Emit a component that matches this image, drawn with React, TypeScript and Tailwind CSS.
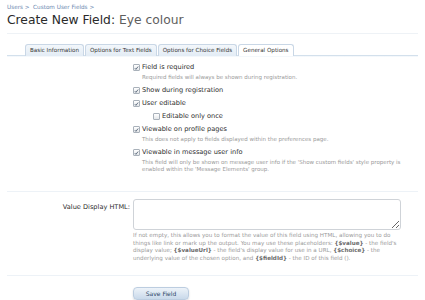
import React from 'react';

const tabs = [
  { label: 'Basic Information', active: false },
  { label: 'Options for Text Fields', active: false },
  { label: 'Options for Choice Fields', active: false },
  { label: 'General Options', active: true },
];

function Check({ checked }: { checked: boolean }) {
  return (
    <span className="mr-[2px] inline-flex h-[7px] w-[7px] shrink-0 items-center justify-center rounded-[1px] border border-[#a9b1ba] bg-gradient-to-b from-white to-[#e4e7ea]">
      {checked && (
        <svg width="6" height="6" viewBox="0 0 6 6" fill="none" aria-hidden="true">
          <path d="M1 3.2 L2.3 4.6 L5 1.2" stroke="#4a5a6e" strokeWidth="1" />
        </svg>
      )}
    </span>
  );
}

function Option({
  label,
  checked = true,
  help,
  indent = false,
}: {
  label: string;
  checked?: boolean;
  help?: React.ReactNode;
  indent?: boolean;
}) {
  return (
    <div className={indent ? 'pl-[20px]' : ''}>
      <label className="flex h-[13px] items-center text-[6.6px] text-[#2e2e2e]">
        <Check checked={checked} />
        {label}
      </label>
      {help && (
        <p className="mb-[3px] pl-[9px] text-[5.5px] leading-[7px] text-[#9a9a9a]">{help}</p>
      )}
    </div>
  );
}

function Ph({ children }: { children: string }) {
  return <b className="text-[#6b6b6b]">{children}</b>;
}

export default function App() {
  return (
    <div className="h-[300px] w-[425px] overflow-hidden bg-white px-[7px] font-['DejaVu_Sans',sans-serif]">
      <div className="pt-[4px] text-[5.7px] leading-[6px] text-[#6a88b0]">
        Users &gt;&nbsp;&nbsp;Custom User Fields &gt;
      </div>
      <h1 className="mt-[3px] text-[12.3px] leading-[15px] text-[#2a2a2a]">
        Create New Field: <span className="text-[#5e5e5e]">Eye colour</span>
      </h1>
      <div className="mt-[5px] border-b border-[#eef2f6]" />

      <div className="mt-[10px]">
        <ul className="flex gap-[1px] pl-[18px]">
          {tabs.map(tab => (
            <li
              key={tab.label}
              className={
                'relative -mb-[1px] flex h-[12px] items-center rounded-t-[3px] border border-b-0 border-[#c9d7e6] px-[4px] text-[5.6px] text-[#333] ' +
                (tab.active ? 'z-10 bg-white' : 'bg-gradient-to-b from-[#f3f7fb] to-[#e3ecf5]')
              }
            >
              {tab.label}
            </li>
          ))}
        </ul>
        <div className="h-[2px] border-t border-[#d3e0ec] bg-gradient-to-b from-[#e9f1f8] to-white" />
      </div>

      <div className="grid grid-cols-[126px_1fr] pt-[4px]">
        <div />
        <div className="pb-[15px]">
          <Option label="Field is required" help="Required fields will always be shown during registration." />
          <Option label="Show during registration" />
          <Option label="User editable" />
          <Option label="Editable only once" checked={false} indent />
          <Option label="Viewable on profile pages" help="This does not apply to fields displayed within the preferences page." />
          <Option
            label="Viewable in message user info"
            help={
              <>
                This field will only be shown on message user info if the 'Show custom fields' style property is
                <br />
                enabled within the 'Message Elements' group.
              </>
            }
          />
        </div>
      </div>

      <div className="border-t border-[#edf2f7]" />

      <div className="grid grid-cols-[126px_1fr] pt-[7px] pb-[12px]">
        <label className="pr-[3px] text-right text-[6.6px] leading-[16px] text-[#2e2e2e]">Value Display HTML:</label>
        <div>
          <textarea className="block h-[31px] w-[268px] resize-y rounded-[3px] border border-[#cfd3d8] bg-white" />
          <p className="mt-[2px] whitespace-nowrap text-[5.6px] leading-[7.7px] text-[#9a9a9a]">
            If not empty, this allows you to format the value of this field using HTML, allowing you to do
            <br />
            things like link or mark up the output. You may use these placeholders: <Ph>{'{$value}'}</Ph> - the field's
            <br />
            display value; <Ph>{'{$valueUrl}'}</Ph> - the field's display value for use in a URL, <Ph>{'{$choice}'}</Ph> - the
            <br />
            underlying value of the chosen option, and <Ph>{'{$fieldId}'}</Ph> - the ID of this field ().
          </p>
        </div>
      </div>

      <div className="border-t border-[#edf2f7]" />

      <div className="grid grid-cols-[126px_1fr] pt-[3px]">
        <div />
        <div>
          <button
            type="button"
            className="h-[13px] w-[56px] rounded-[4px] border border-[#bccde0] bg-gradient-to-b from-[#edf3f9] to-[#c9d9ea] text-[6px] text-[#2c4666] shadow-[0_1px_2px_rgba(0,0,0,0.15)]"
          >
            Save Field
          </button>
        </div>
      </div>
    </div>
  );
}
